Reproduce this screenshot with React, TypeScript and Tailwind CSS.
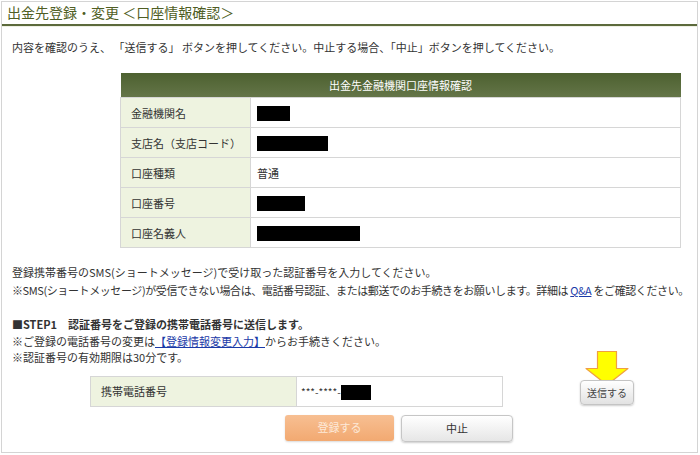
import React from "react";

const rows: { label: string; value?: string; mask?: number }[] = [
  { label: "金融機関名", mask: 33 },
  { label: "支店名（支店コード）", mask: 71 },
  { label: "口座種類", value: "普通" },
  { label: "口座番号", mask: 48 },
  { label: "口座名義人", mask: 103 },
];

function Mask({ w }: { w: number }) {
  return <span className="inline-block h-[15px] bg-black align-middle" style={{ width: w }} />;
}

function Arrow() {
  return (
    <svg className="absolute left-[5px] top-[-27px]" width="44" height="35" viewBox="0 0 44 35">
      <path
        d="M12.5 0.5 H31.5 V17.5 H43 L22 34 L1 17.5 H12.5 Z"
        fill="#ffff00"
        stroke="#f0a040"
        strokeWidth="1.2"
        strokeLinejoin="round"
      />
    </svg>
  );
}

export default function App() {
  return (
    <div className="h-[455px] w-[700px] bg-white pl-px pt-px font-['Meiryo','Noto_Sans_CJK_JP',sans-serif] text-[#333]">
      <div className="h-[452px] w-[697px] border border-[#d4d4d4]">
        {/* title */}
        <div className="border-b-2 border-[#5c6a3c] px-[5px] pb-[1px] text-[14px] leading-[21px] text-[#4f5e24]">
          出金先登録・変更 ＜口座情報確認＞
        </div>
        <div className="h-px bg-[#eef0e4]" />

        <p className="ml-[10px] mt-[12px] text-[11px] leading-[16px]">
          内容を確認のうえ、 「送信する」 ボタンを押してください。中止する場合、「中止」ボタンを押してください。
        </p>

        {/* account table */}
        <table className="ml-[118px] mt-[18px] w-[561px] border-collapse text-[11px]">
          <thead>
            <tr>
              <th
                colSpan={2}
                className="h-[24px] bg-gradient-to-b from-[#4d6130] to-[#647548] p-0 text-center font-normal leading-[24px] text-white"
              >
                出金先金融機関口座情報確認
              </th>
            </tr>
          </thead>
          <tbody>
            {rows.map((r) => (
              <tr key={r.label} className="h-[30px]">
                <td className="w-[130px] border border-[#d6d6d6] bg-[#eef3e0] pl-[10px] leading-[16px]">
                  {r.label}
                </td>
                <td className="border border-[#d6d6d6] pl-[6px] leading-[16px]">
                  {r.mask ? <Mask w={r.mask} /> : r.value}
                </td>
              </tr>
            ))}
          </tbody>
        </table>

        {/* sms notes */}
        <div className="ml-[10px] mt-[15px] text-[11px] leading-[18px]">
          <p>登録携帯番号のSMS(ショートメッセージ)で受け取った認証番号を入力してください。</p>
          <p className="whitespace-nowrap tracking-[-0.4px]">
            ※SMS(ショートメッセージ)が受信できない場合は、電話番号認証、または郵送でのお手続きをお願いします。詳細は{" "}
            <a className="text-[#1a3aa8] underline">Q&amp;A</a> をご確認ください。
          </p>
        </div>

        <div className="ml-[10px] mt-[17px] text-[11px] leading-[16.5px]">
          <p className="font-bold">■STEP1　認証番号をご登録の携帯電話番号に送信します。</p>
          <p>
            ※ご登録の電話番号の変更は
            <a className="text-[#1a3aa8] underline">【登録情報変更入力】</a>
            からお手続きください。
          </p>
          <p>※認証番号の有効期限は30分です。</p>
        </div>

        {/* phone row */}
        <div className="mt-[10px] flex items-center">
          <table className="ml-[88px] w-[413px] border-collapse text-[11px]">
            <tbody>
              <tr className="h-[30px]">
                <td className="w-[206px] border border-[#d6d6d6] bg-[#eef3e0] pl-[10px] leading-[16px]">
                  携帯電話番号
                </td>
                <td className="border border-[#d6d6d6] pl-[4px] leading-[16px]">
                  <span className="align-middle text-[10px]">***-****-</span>
                  <Mask w={30} />
                </td>
              </tr>
            </tbody>
          </table>
          <div className="relative ml-[77px]">
            <Arrow />
            <button
              type="button"
              className="relative h-[25px] w-[54px] rounded-[4px] border border-[#c4c4c4] bg-gradient-to-b from-white to-[#e2e2e2] text-[10px] text-[#444] shadow-[0_1px_2px_rgba(0,0,0,0.2)]"
            >
              送信する
            </button>
          </div>
        </div>

        {/* actions */}
        <div className="ml-[283px] mt-[8px] flex gap-[7px]">
          <button
            type="button"
            className="h-[26px] w-[109px] rounded-[3px] bg-gradient-to-b from-[#f7bf92] to-[#f2a971] text-[11px] text-[#fde9d8] shadow-[0_1px_2px_rgba(0,0,0,0.15)]"
          >
            登録する
          </button>
          <button
            type="button"
            className="h-[27px] w-[112px] rounded-[4px] border border-[#c6c6c6] bg-gradient-to-b from-white to-[#e6e6e6] text-[11px] text-[#333] shadow-[0_1px_2px_rgba(0,0,0,0.2)]"
          >
            中止
          </button>
        </div>
      </div>
    </div>
  );
}
